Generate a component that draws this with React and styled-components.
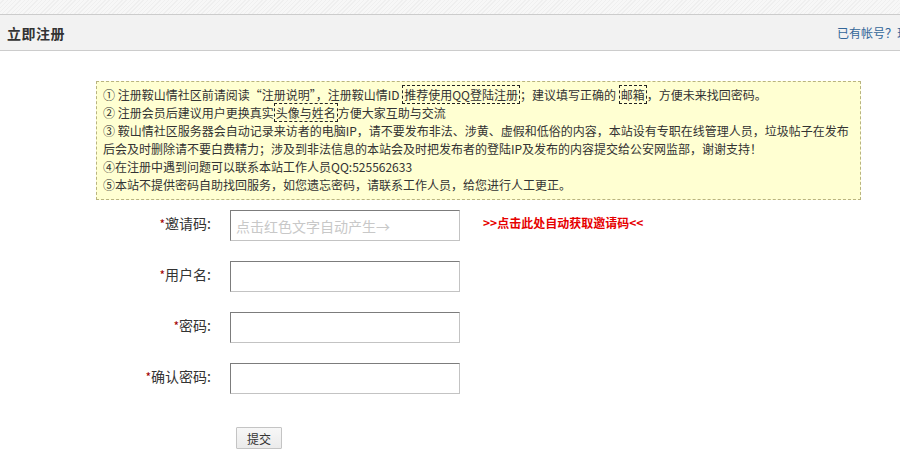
import React from "react";
import styled, { createGlobalStyle } from "styled-components";

const Global = createGlobalStyle`
  html, body { margin: 0; padding: 0; background: #fff; }
  body {
    font-family: "Noto Sans CJK SC", "Noto Sans", sans-serif;
    font-size: 12px;
    color: #333;
    overflow: hidden;
  }
`;

const Page = styled.div`
  width: 900px;
  height: 460px;
  overflow: hidden;
`;

const Stripe = styled.div`
  height: 14px;
  background: repeating-linear-gradient(
    135deg,
    #f7f7f7 0px,
    #f7f7f7 2px,
    #efefef 2px,
    #efefef 3px
  );
`;

const Header = styled.div`
  display: flex;
  align-items: center;
  justify-content: space-between;
  height: 35px;
  border-top: 1px solid #cccccc;
  border-bottom: 1px solid #cccccc;
  background: #f2f2f2;
  padding-left: 7px;
  white-space: nowrap;
`;

const Title = styled.h2`
  margin: 0;
  font-size: 14px;
  font-weight: bold;
  color: #333;
  letter-spacing: 0.5px;
`;

const LoginLink = styled.a`
  font-size: 12px;
  color: #336699;
  text-decoration: none;
  margin-right: -45px;
`;

const Notice = styled.div`
  margin: 30px 0 0 96px;
  width: 752px;
  padding: 4px 5px 5px 6px;
  border: 1px dashed #b9b47f;
  background: #ffffd2;
  line-height: 18px;
  font-size: 12px;
  color: #333;
`;

const Line = styled.div``;

const Mark = styled.span`
  border: 1px dashed #222;
  padding: 0 1px;
`;

const Form = styled.div`
  display: grid;
  grid-template-columns: 212px 230px auto;
  column-gap: 18px;
  row-gap: 20px;
  margin-top: 10px;
  align-items: center;
`;

const Label = styled.label`
  text-align: right;
  font-size: 14px;
  color: #333;
  padding-right: 1px;
  padding-bottom: 5px;
`;

const Star = styled.span`
  color: #a00000;
  font-size: 12px;
`;

const Input = styled.input`
  box-sizing: border-box;
  width: 230px;
  height: 31px;
  margin: 0;
  padding: 0 5px;
  border: 1px solid #c3c3c3;
  border-top-color: #7c7c7c;
  border-left-color: #7c7c7c;
  font-family: inherit;
  font-size: 14px;
  color: #333;
  background: #fff;
  outline: none;
  &::placeholder { color: #c8c8c8; }
`;

const GetCode = styled.a`
  color: #e60000;
  font-weight: bold;
  font-size: 12px;
  text-decoration: none;
  margin-left: 5px;
  margin-top: -6px;
`;

const Empty = styled.span``;

const ButtonRow = styled.div`
  margin: 33px 0 0 236px;
`;

const Submit = styled.button`
  width: 46px;
  height: 22px;
  padding: 0;
  font-family: inherit;
  font-size: 12px;
  color: #333;
  background: linear-gradient(#f7f7f7, #ebebeb);
  border: 1px solid #c4c4c4;
  border-radius: 1px;
`;

const fields = [
  { label: "邀请码", placeholder: "点击红色文字自动产生→", extra: true },
  { label: "用户名" },
  { label: "密码" },
  { label: "确认密码" },
];

export default function App() {
  return (
    <Page>
      <Global />
      <Stripe />
      <Header>
        <Title>立即注册</Title>
        <LoginLink href="#">已有帐号？现在登录</LoginLink>
      </Header>
      <Notice>
        <Line>
          ① 注册鞍山情社区前请阅读“注册说明”，注册鞍山情ID <Mark>推荐使用QQ登陆注册</Mark>；建议填写正确的 <Mark>邮箱</Mark>，方便未来找回密码。
        </Line>
        <Line>
          ② 注册会员后建议用户更换真实<Mark>头像与姓名</Mark>方便大家互助与交流
        </Line>
        <Line>
          ③ 鞍山情社区服务器会自动记录来访者的电脑IP，请不要发布非法、涉黄、虚假和低俗的内容，本站设有专职在线管理人员，垃圾帖子在发布后会及时删除请不要白费精力；涉及到非法信息的本站会及时把发布者的登陆IP及发布的内容提交给公安网监部，谢谢支持！
        </Line>
        <Line>④在注册中遇到问题可以联系本站工作人员QQ:525562633</Line>
        <Line>⑤本站不提供密码自助找回服务，如您遗忘密码，请联系工作人员，给您进行人工更正。</Line>
      </Notice>
      <Form>
        {fields.map((f) => (
          <React.Fragment key={f.label}>
            <Label>
              <Star>*</Star>
              {f.label}:
            </Label>
            <Input placeholder={f.placeholder || ""} type={f.label.includes("密码") ? "password" : "text"} />
            {f.extra ? <GetCode href="#">&gt;&gt;点击此处自动获取邀请码&lt;&lt;</GetCode> : <Empty />}
          </React.Fragment>
        ))}
      </Form>
      <ButtonRow>
        <Submit>提交</Submit>
      </ButtonRow>
    </Page>
  );
}
